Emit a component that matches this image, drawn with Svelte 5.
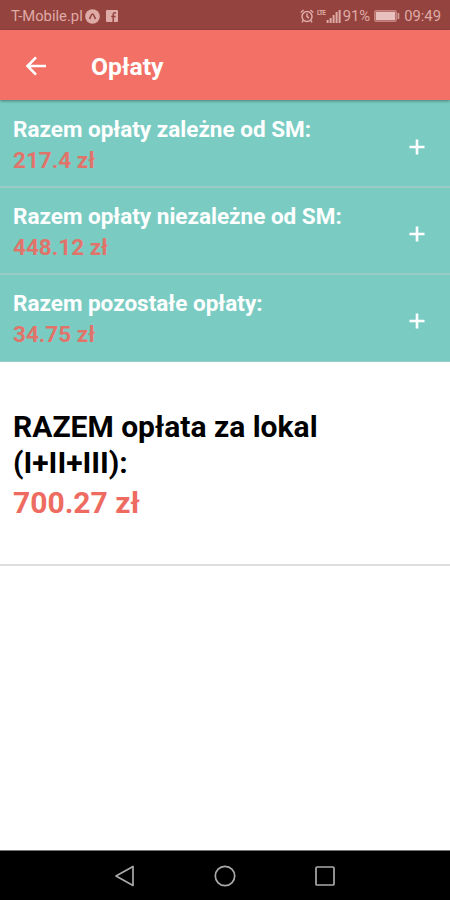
<script lang="ts">
    interface FeeGroup {
        label: string;
        amount: number;
    }

    const groups: FeeGroup[] = [
        { label: 'Razem opłaty zależne od SM:', amount: 217.4 },
        { label: 'Razem opłaty niezależne od SM:', amount: 448.12 },
        { label: 'Razem pozostałe opłaty:', amount: 34.75 }
    ];

    const total = 700.27;
    // Signal bar heights, weakest first
    const bars = [3, 5, 8, 11, 13];
</script>

<div class="screen">
    <div class="status-bar">
        <span class="carrier">T-Mobile.pl</span>
        <svg class="badge" width="15" height="15" viewBox="0 0 15 15">
            <circle cx="7.5" cy="7.5" r="7.3" fill="currentColor" />
            <path d="M4.5 10C5.6 8.2 6.2 5 7.5 5s1.9 3.2 3 5" fill="none" stroke="#95433e" stroke-width="1.6" />
        </svg>
        <svg class="facebook" width="12" height="12" viewBox="0 0 12 12">
            <rect width="12" height="12" rx="1" fill="currentColor" />
            <path d="M7.2 12V4.7c0-1.4.7-2 2.7-1.8M5.2 6.5h4.4" fill="none" stroke="#95433e" stroke-width="1.5" />
        </svg>

        <svg class="alarm" width="14" height="14" viewBox="0 0 14 14" fill="none" stroke="currentColor" stroke-width="1.5">
            <circle cx="7" cy="7.5" r="5" />
            <path d="M7 4.5v3.2l2 1.3M.8 3.5L3.6 1M13.2 3.5L10.4 1M3.2 11.5L2 13.2M10.8 11.5l1.2 1.7" />
        </svg>
        <svg class="signal" width="25" height="15" viewBox="0 0 25 15">
            <text x="0" y="6" font-size="6.5" font-weight="700" fill="currentColor" textLength="9">LTE</text>
            {#each bars as height, i}
                <rect x={9.6 + i * 3} y={14 - height} width="2" {height} fill="currentColor" />
            {/each}
        </svg>
        <span class="percent">91%</span>
        <svg class="battery" width="26" height="12" viewBox="0 0 26 12">
            <rect x=".6" y=".6" width="21.8" height="10.8" rx="1" fill="#b8706d" stroke="#c98784" />
            <rect x="2" y="2" width="19" height="8" fill="#e8c0be" />
            <rect x="23.5" y="3" width="1.8" height="6" fill="#d09a97" />
        </svg>
        <span class="clock">09:49</span>
    </div>

    <header class="app-bar">
        <button class="back" aria-label="Wstecz">
            <svg width="22" height="22" viewBox="0 0 22 22" fill="none" stroke="currentColor" stroke-width="2.6">
                <path d="M21 11H3M11 2.3L2.5 11l8.5 8.7" />
            </svg>
        </button>
        <h1>Opłaty</h1>
    </header>

    <main>
        {#each groups as group}
            <button class="group">
                <span class="details">
                    <span class="label">{group.label}</span>
                    <span class="amount">{group.amount} zł</span>
                </span>
                <svg width="16" height="16" viewBox="0 0 16 16" fill="none" stroke="currentColor" stroke-width="2.6">
                    <path d="M8 .5v15M.5 8h15" />
                </svg>
            </button>
        {/each}

        <section class="total">
            <h2>RAZEM opłata za lokal (I+II+III):</h2>
            <p>{total} zł</p>
        </section>
    </main>

    <nav class="system-nav" aria-label="System">
        <svg width="24" height="24" viewBox="0 0 24 24">
            <path d="M20 2.5v19L3 12z" />
        </svg>
        <svg width="24" height="24" viewBox="0 0 24 24">
            <circle cx="12" cy="12" r="9.7" />
        </svg>
        <svg width="24" height="24" viewBox="0 0 24 24">
            <rect x="3" y="3" width="18" height="18" rx="1" />
        </svg>
    </nav>
</div>

<style>
:global(body) {
  margin: 0;
}

.screen {
  display: flex;
  flex-direction: column;
  height: 900px;
  background: #fff;
  color: #000;
  font-family: Roboto, sans-serif;
}

button {
  border: 0;
  padding: 0;
  background: none;
  color: inherit;
  font: inherit;
  text-align: left;
}

svg {
  display: block;
  flex: none;
}

.status-bar {
  display: flex;
  align-items: center;
  box-sizing: border-box;
  height: 30px;
  padding: 2px 9px 0 11px;
  background: #95433e;
  color: #dfaba7;
  font-size: 14.8px;
}

.carrier {
  width: 74px;
  white-space: nowrap;
}

.facebook {
  margin-left: 6px;
}

.alarm {
  margin-left: auto;
}

.signal {
  margin-left: 3px;
}

.percent {
  margin-left: 1px;
}

.battery {
  margin: 0 4px;
}

.app-bar {
  position: relative;
  display: flex;
  align-items: center;
  height: 70px;
  padding: 1px 25px 0;
  box-sizing: border-box;
  background: #f27065;
  color: #fff;
  box-shadow: 0 1px 3px rgba(0, 0, 0, 0.4);
}

.app-bar h1 {
  margin: 2px 0 0 44px;
  font-size: 24.7px;
  font-weight: 700;
  line-height: 30px;
}

.group {
  display: flex;
  align-items: center;
  justify-content: space-between;
  box-sizing: border-box;
  width: 100%;
  height: 87px;
  padding: 1px 25px 0 13px;
  border-bottom: 2px solid #9bcbc7;
  background: #7accc3;
  color: #fff;
}

.group:first-child {
  height: 88px;
  padding-top: 2px;
}

.group:last-of-type {
  border-bottom-width: 1px;
}

.details {
  display: flex;
  flex-direction: column;
  font-size: 22.5px;
  font-weight: 700;
  line-height: 30px;
}

.amount {
  margin-top: 1px;
  color: #e1746a;
}

.group svg {
  margin-top: 5px;
}

.total {
  box-sizing: border-box;
  height: 204px;
  padding: 47px 13px 0;
  border-bottom: 2px solid #dedede;
}

.total h2,
.total p {
  margin: 0;
  font-size: 30px;
  font-weight: 700;
  line-height: 36px;
}

.total p {
  margin-top: 4px;
  color: #ed6b60;
}

.system-nav {
  display: flex;
  align-items: center;
  justify-content: center;
  gap: 76px;
  box-sizing: border-box;
  height: 50px;
  margin-top: auto;
  border-top: 1px solid #777;
  background: #000;
  fill: none;
  stroke: #aaa;
  stroke-width: 1.7;
  stroke-linejoin: round;
}
</style>
